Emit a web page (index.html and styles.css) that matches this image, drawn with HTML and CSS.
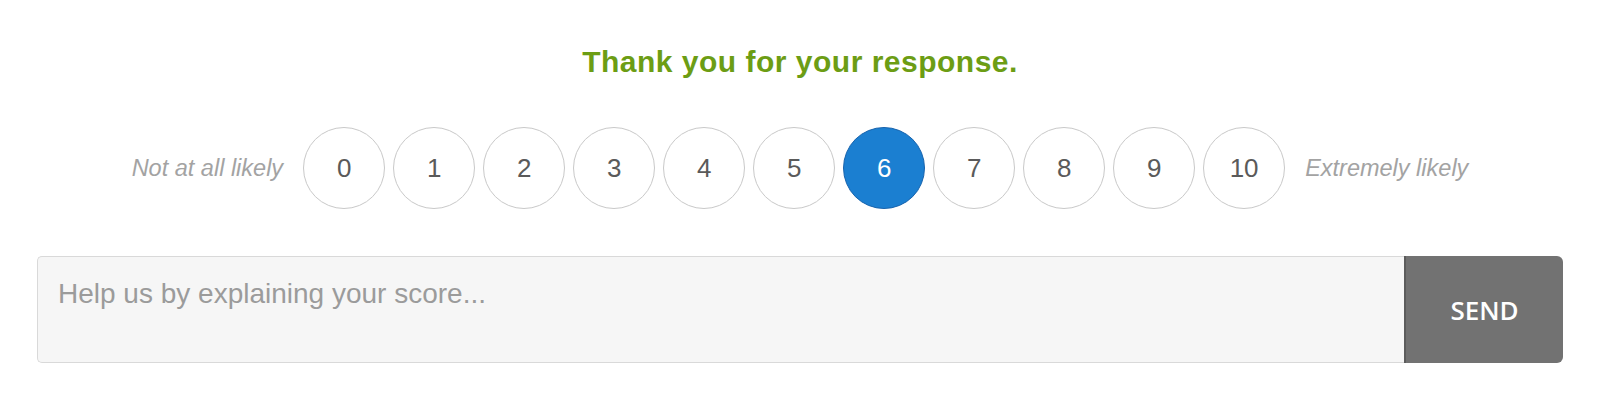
FILE: index.html
```html
<!DOCTYPE html>
<html lang="en">
<head>
    <meta charset="UTF-8" />
    <title>How likely are you to recommend us?</title>
    <link rel="stylesheet" href="styles.css">
</head>
<body>
    <main class="survey">
        <h1 class="thanks">Thank you for your response.</h1>

        <div class="scale">
            <span class="scale-label">Not at all likely</span>
            <button class="score">0</button>
            <button class="score">1</button>
            <button class="score">2</button>
            <button class="score">3</button>
            <button class="score">4</button>
            <button class="score">5</button>
            <button class="score selected">6</button>
            <button class="score">7</button>
            <button class="score">8</button>
            <button class="score">9</button>
            <button class="score">10</button>
            <span class="scale-label">Extremely likely</span>
        </div>

        <form class="feedback">
            <textarea class="feedback-text" placeholder="Help us by explaining your score..."></textarea>
            <button type="submit" class="send">SEND</button>
        </form>
    </main>
</body>
</html>
```

FILE: styles.css
```css
body {
    margin: 0;
    padding: 0;
    background-color: #ffffff;
    font-family: "Liberation Sans", Arial, sans-serif;
}

.survey {
    padding: 46px 37px 0;
}

.thanks {
    margin: 0;
    font-size: 30px;
    line-height: 32px;
    font-weight: bold;
    letter-spacing: 0.5px;
    color: #6c9d14;
    text-align: center;
}

.scale {
    display: flex;
    justify-content: center;
    align-items: center;
    gap: 8px;
    margin-top: 49px;
}

.scale-label {
    font-size: 23.5px;
    font-style: italic;
    color: #a3a3a3;
    margin: 0 12px;
}

.score {
    width: 82px;
    height: 82px;
    box-sizing: border-box;
    border-radius: 50%;
    border: 1.5px solid #c9c9c9;
    background-color: #ffffff;
    color: #5a5a5a;
    font-family: "Liberation Sans", Arial, sans-serif;
    font-size: 26px;
    padding: 0;
    cursor: pointer;
}

.score.selected {
    background-color: #1b7fd1;
    border-color: #1763ad;
    color: #ffffff;
}

.feedback {
    display: flex;
    margin-top: 47px;
    height: 107px;
}

.feedback-text {
    flex: 1;
    box-sizing: border-box;
    height: 100%;
    margin: 0;
    padding: 21px 20px;
    border: 1px solid #d9d9d9;
    border-right: none;
    border-radius: 5px 0 0 5px;
    background-color: #f6f6f6;
    font-family: "Liberation Sans", Arial, sans-serif;
    font-size: 28px;
    color: #555;
    resize: none;
    outline: none;
}

.feedback-text::placeholder {
    color: #9b9b9b;
}

.send {
    width: 159px;
    height: 100%;
    margin: 0;
    border: none;
    border-left: 2px solid #5c5c5c;
    border-radius: 0 6px 6px 0;
    background-color: #727272;
    color: #ffffff;
    font-family: "Open Sans", sans-serif;
    font-size: 26px;
    font-weight: 600;
    cursor: pointer;
}
```
